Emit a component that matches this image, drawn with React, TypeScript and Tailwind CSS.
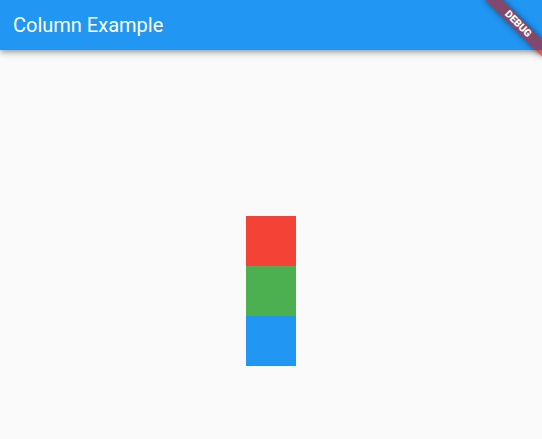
export default function App() {
  return (
    <div className="relative w-[542px] h-[439px] overflow-hidden bg-[#fafafa] flex flex-col" style={{ fontFamily: "Roboto, 'Liberation Sans', sans-serif" }}>
      <div className="h-[50px] shrink-0 bg-[#2196f3] flex items-center pl-[13px] z-10 shadow-[0_2px_4px_-1px_rgba(0,0,0,0.2),0_4px_5px_0_rgba(0,0,0,0.14),0_1px_10px_0_rgba(0,0,0,0.12)]">
        <span className="text-white text-[20px] leading-none">Column Example</span>
      </div>
      <div className="flex-1 flex flex-col items-center pt-[166px]">
        <div className="w-[50px] h-[50px] bg-[#f44336]" />
        <div className="w-[50px] h-[50px] bg-[#4caf50]" />
        <div className="w-[50px] h-[50px] bg-[#2196f3]" />
      </div>
      <div className="absolute left-[478px] top-[18px] w-[80px] h-[12px] rotate-45 bg-[#b71c1c]/[0.63] flex items-center justify-center z-20 shadow-[0_0_6px_rgba(0,0,0,0.5)]">
        <span className="text-white text-[10.2px] font-black leading-none">DEBUG</span>
      </div>
    </div>
  );
}
